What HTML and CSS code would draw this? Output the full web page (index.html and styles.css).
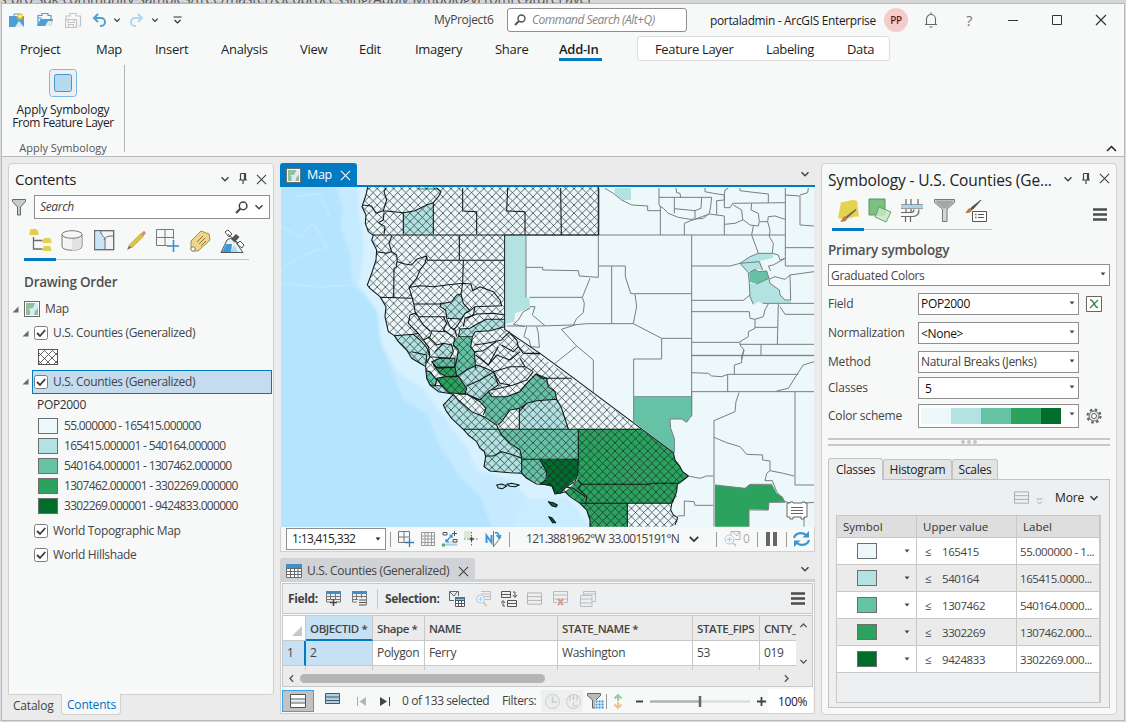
FILE: index.html
```html
<!DOCTYPE html>
<html lang="en">
<head>
<meta charset="utf-8">
<title>MyProject6</title>
<link rel="stylesheet" href="styles.css">
</head>
<body>
<svg class="defs" width="0" height="0" aria-hidden="true">
  <defs>
    <symbol id="chev" viewBox="0 0 10 10"><path d="M1.500 3.200l3.500 3.500 3.500-3.500" fill="none" stroke="currentColor" stroke-width="1.500"/></symbol>
    <symbol id="close" viewBox="0 0 12 12"><path d="M1 1l10 10M11 1L1 11" fill="none" stroke="currentColor" stroke-width="1.200"/></symbol>
    <symbol id="pin" viewBox="0 0 10 12"><path d="M2.500 .5h5v6M2.500 .5v6M6.500 .5v6M1 7h8M5 7v4" fill="none" stroke="currentColor" stroke-width="1.200"/></symbol>
    <symbol id="caret" viewBox="0 0 6 4"><path d="M.6.500h4.800L3 3.400z" fill="currentColor"/></symbol>
    <symbol id="lens" viewBox="0 0 12 12"><circle cx="7.500" cy="4.500" r="3.500" fill="none" stroke="currentColor" stroke-width="1.400"/><path d="M5 7L1 11" stroke="currentColor" stroke-width="1.900"/></symbol>
    <symbol id="check" viewBox="0 0 14 14"><rect x=".5" y=".5" width="13" height="13" rx="2" fill="#fff" stroke="#7c7c7c"/><path d="M3 7l3 3 5.200-6" fill="none" stroke="#3c3c3c" stroke-width="1.800"/></symbol>
    <symbol id="tri" viewBox="0 0 7 7"><path d="M6.500.5v6h-6z" fill="#6a6a6a"/></symbol>
    <symbol id="mapico" viewBox="0 0 16 16"><rect x=".5" y=".5" width="15" height="15" fill="#fff" stroke="#6a6a6a"/><path d="M2 2h12v12H2z" fill="#93bf95"/><path d="M14 2v5l-3 3-1 4H6V9L4 8l5-1 2-5z" fill="#d6ecfa"/></symbol>
    <symbol id="hamb" viewBox="0 0 14 13"><path d="M0 1.500h14M0 6.500h14M0 11.500h14" stroke="#4c4c4c" stroke-width="2.600"/></symbol>
    <symbol id="rows" viewBox="0 0 16 14"><path d="M.5.500h15v12H.5zM.5 4.500h15M.5 8.500h15" fill="none" stroke="currentColor"/></symbol>
    <symbol id="grid" viewBox="0 0 16 14"><path d="M.5.500h15v13H.5z" fill="#fff" stroke="#6a6a6a"/><path d="M0 0h16v4H0z" fill="#3f8fc8"/><path d="M.5 4.500h15M.5 7.500h15M.5 10.500h15M4.500 4v10M8.500 4v10M12 4v10" stroke="#6a6a6a" fill="none"/></symbol>
    <pattern id="hatch" width="8.200" height="8.200" patternUnits="userSpaceOnUse"><path d="M0 0l8.200 8.200M8.200 0L0 8.200" stroke="#16201f" stroke-opacity=".74" stroke-width=".9"/></pattern>
    <filter id="soft" x="-20%" y="-20%" width="140%" height="140%"><feGaussianBlur stdDeviation="5"/></filter>
  </defs>
</svg>

<div class="backdrop"><span>s-pro-sdk-community-samples/tree/master/Geoprocessing/ApplySymbologyFromFeatureLayer</span></div>
<div class="window">
  <header class="ribbon">
    <div class="titlebar">
      <div class="quick">
        <svg width="16" height="16" viewBox="0 0 16 16"><path d="M5 5V2h5v3" fill="none" stroke="#4f9fd6"/><path d="M0 4h15v11H0z" fill="#4f9fd6"/><path d="M6 15l4-6 5 6z" fill="#d8eef8"/><path d="M11 1v7M7.500 4.500h7M8.500 2l5 5M13.500 2l-5 5" stroke="#e0b92d" stroke-width="1.200"/><circle cx="11" cy="4.500" r="1.800" fill="#fdeb8b"/></svg>
        <svg width="17" height="16" viewBox="0 0 17 16"><path d="M1 14V3.500h4V1.500h6v2h3V7M1 6h4" fill="none" stroke="#4f9fd6" stroke-width="1.200"/><path d="M0 14l3.500-7H16l-2 7z" fill="#4f9fd6"/><path d="M8 14l3-5 4 0-1 5z" fill="#d9efe0"/></svg>
        <svg width="17" height="16" viewBox="0 0 17 16"><path d="M1 8V4h4V1.500h6V4h4.500v10H13M0.500 7.500h11v8H.5zM3 7.500v3h6v-3M3.500 15.500v-3h5v3" fill="none" stroke="#c4c4c4" stroke-width="1.200"/></svg>
        <svg width="15" height="14" viewBox="0 0 15 14"><path d="M6 1L2 5l4 4M2 5h7a4 4 0 0 1 0 8H8" fill="none" stroke="#4f9fd6" stroke-width="2"/></svg>
        <svg width="8" height="8" class="dk"><use href="#chev"/></svg>
        <svg width="15" height="14" viewBox="0 0 15 14"><path d="M9 1l4 4-4 4M13 5H6a4 4 0 0 0 0 8h1" fill="none" stroke="#b3d5ee" stroke-width="2"/></svg>
        <svg width="8" height="8" class="dk"><use href="#chev"/></svg>
        <svg width="9" height="9" viewBox="0 0 9 9"><path d="M.5 1h8M1.500 4l3 3 3-3" fill="none" stroke="#333" stroke-width="1.200"/></svg>
      </div>
      <span class="proj">MyProject6</span>
      <div class="cmd"><svg width="12" height="12" class="gy"><use href="#lens"/></svg><i>Command Search (Alt+Q)</i></div>
      <span class="user">portaladmin - ArcGIS Enterprise</span>
      <span class="avatar">PP</span>
      <svg class="bell" width="14" height="16" viewBox="0 0 14 16"><path d="M1 12.500h12M2.500 12V7a4.500 4.500 0 0 1 9 0v5M7 2.500V.5M5.500 15h3" fill="none" stroke="#666" stroke-width="1.100"/></svg>
      <span class="help">?</span>
      <svg class="min" width="10" height="10" viewBox="0 0 10 10"><path d="M0 5.500h10" stroke="#333"/></svg>
      <svg class="max" width="10" height="10" viewBox="0 0 10 10"><path d="M.5.500h9v9h-9z" stroke="#333" fill="none"/></svg>
      <svg class="cls dk" width="12" height="12"><use href="#close"/></svg>
    </div>
    <nav class="tabs">
      <span>Project</span><span>Map</span><span>Insert</span><span>Analysis</span><span>View</span><span>Edit</span><span>Imagery</span><span>Share</span><b>Add-In</b>
      <div class="ctx"><span>Feature Layer</span><span>Labeling</span><span>Data</span></div>
    </nav>
    <div class="tools">
      <div class="group">
        <svg width="28" height="28" viewBox="0 0 28 28"><rect x=".5" y=".5" width="27" height="27" rx="3" fill="#efefef" stroke="#79b9e6"/><rect x="5.500" y="5.500" width="17" height="17" rx="2" fill="#b9d9ef" stroke="#3f97d3"/></svg>
        <p>Apply Symbology</p>
        <p>From Feature Layer</p>
        <small>Apply Symbology</small>
      </div>
      <svg class="collapse" width="11" height="7" viewBox="0 0 11 7"><path d="M1 6l4.500-4.500L10 6" fill="none" stroke="#222" stroke-width="1.500"/></svg>
    </div>
  </header>

  <main class="docks">
    <aside class="left">
      <section class="pane contents">
        <div class="phead"><h2>Contents</h2><svg width="10" height="10"><use href="#chev"/></svg><svg width="10" height="12"><use href="#pin"/></svg><svg width="11" height="11"><use href="#close"/></svg></div>
        <div class="searchrow">
          <svg width="14" height="17" viewBox="0 0 14 17"><path d="M.5.500h13v2L8.500 8v8h-3V8L.5 2.500z" fill="#c9cbcd" stroke="#666"/></svg>
          <div class="search"><i>Search</i><svg width="13" height="13"><use href="#lens"/></svg><svg width="10" height="10"><use href="#chev"/></svg></div>
        </div>
        <div class="icons">
          <svg width="23" height="23" viewBox="0 0 23 23"><path d="M4.500 8v12h9M4.500 11.500h9" fill="none" stroke="#6a6a6a" stroke-width="1.300"/><path d="M1.500 0h6l2 3v3H.5V3zM15 9h6l1.500 3v2h-9v-2zM15 17h6l1.500 3v2h-9v-2z" fill="#e3ce4d"/></svg>
          <svg width="22" height="22" viewBox="0 0 22 22"><path d="M1 4.500v12c0 5 20 5 20 0v-12" fill="#f4f4f4" stroke="#777"/><path d="M11 8h9.500v9c-1 2.500-6 3.500-9.500 3.500z" fill="#e1e1e1"/><ellipse cx="11" cy="4.500" rx="10" ry="3.800" fill="#f7f7f7" stroke="#777"/></svg>
          <svg width="21" height="21" viewBox="0 0 21 21"><rect x=".7" y=".7" width="19" height="19" fill="#f3f3f3" stroke="#666" stroke-width="1.300"/><path d="M1.500 1.500h5c1 5 5 5 4 9v8.500h-9z" fill="#c9e6f8"/><path d="M6.500 1c1 6 5 5 4.500 10v8M10 10c2-4 5-4 9-4" fill="none" stroke="#666"/></svg>
          <svg width="21" height="21" viewBox="0 0 21 21"><path d="M1 20l2-4.500 2.500 2z" fill="#6a6a6a"/><path d="M3 15.500L15 3.500 17.500 6l-12 12z" fill="#e2c53b" stroke="#a98c22" stroke-width=".7"/><path d="M15 3.500L18 .8l2 2.200-2.500 3z" fill="#d98a72"/></svg>
          <svg width="24" height="23" viewBox="0 0 24 23"><path d="M.5.500h17V10M.5.500v16H11M9 .5v16M.5 8.500h17" fill="none" stroke="#777"/><path d="M17.500 11v12M11 17h12" stroke="#2f8fce" stroke-width="1.500"/></svg>
          <svg width="22" height="22" viewBox="0 0 22 22"><path d="M2 11L12 1l8 3 1 6-12 11H4l-2-2z" fill="#ecd68c" stroke="#b08a3a"/><path d="M8 12l6-6M10 14l6-6M12 16l5-5" stroke="#8d7440"/><circle cx="4" cy="19" r="2.200" fill="#fff" stroke="#777"/></svg>
          <svg width="25" height="24" viewBox="0 0 25 24"><path d="M1 23.500L7 11l4-2 4 3 8 11.500z" fill="#e7f2e9" stroke="#555"/><path d="M2 23l4-8h6l-1 8z" fill="#3c9ad8"/><path d="M14 16l4 7h-7z" fill="#a8d9f5"/><path d="M5 3l3-2 4 4-3 3zM17 15l3-3 4 4-2 3z" fill="#fff" stroke="#555"/><path d="M8 5l10 9" stroke="#555"/><path d="M11 10l5-5 3.500 3-5 5.500z" fill="#555"/></svg>
        </div>
        <div class="tabline"><span></span></div>
        <h3>Drawing Order</h3>
        <ul class="toc">
          <li class="t-map"><svg width="7" height="7"><use href="#tri"/></svg><svg width="16" height="16"><use href="#mapico"/></svg>Map</li>
          <li class="t-layer"><svg width="7" height="7"><use href="#tri"/></svg><svg width="14" height="14"><use href="#check"/></svg>U.S. Counties (Generalized)</li>
          <li class="t-sym"><svg width="20" height="16" viewBox="0 0 20 16"><rect x=".5" y=".5" width="19" height="15" fill="#fff" stroke="#555"/><path d="M1 7l6-6M1 15L15 1M8 15L19 4M16 15l3-3M1 4l11 11M1 12l3 3M6 1l13 13M14 1l5 5" stroke="#444" stroke-width=".8"/></svg></li>
          <li class="t-layer sel"><svg width="7" height="7"><use href="#tri"/></svg><div><svg width="14" height="14"><use href="#check"/></svg>U.S. Counties (Generalized)</div></li>
          <li class="t-pop">POP2000</li>
          <li class="t-class"><span class="sw c1"></span>55.000000 - 165415.000000</li>
          <li class="t-class"><span class="sw c2"></span>165415.000001 - 540164.000000</li>
          <li class="t-class"><span class="sw c3"></span>540164.000001 - 1307462.000000</li>
          <li class="t-class"><span class="sw c4"></span>1307462.000001 - 3302269.000000</li>
          <li class="t-class"><span class="sw c5"></span>3302269.000001 - 9424833.000000</li>
          <li class="t-base"><svg width="14" height="14"><use href="#check"/></svg>World Topographic Map</li>
          <li class="t-base"><svg width="14" height="14"><use href="#check"/></svg>World Hillshade</li>
        </ul>
      </section>
      <div class="ptabs"><span>Catalog</span><span class="on">Contents</span></div>
    </aside>

    <section class="center">
      <div class="mtabs"><div class="mtab"><svg width="15" height="15"><use href="#mapico"/></svg><span>Map</span><svg width="11" height="11"><use href="#close"/></svg></div><svg width="10" height="10"><use href="#chev"/></svg></div>
      <svg class="map" width="533" height="340" viewBox="281 187 533 340">
        <rect x="281" y="187" width="534" height="340" fill="#b5e4fe"/>
        <g transform="translate(280 160) scale(.33333)">
          <path d="M160 60L190 150 180 200 210 280 215 370 290 440 300 540 330 620 370 720 440 760 480 860 540 950 600 1010 640 1110H1000L700 600 400 60z" fill="#c6eaff" filter="url(#soft)"/>
          <path d="M235 60L235 160 250 230 250 300 235 370 295 460 305 550 355 640 425 680 485 760 560 860 590 930 690 960 770 1040 840 1110H1000L700 600 400 60z" fill="#d8f1ff" filter="url(#soft)"/>
          <path d="M0 200L60 230 100 190 140 260 60 290 0 330M0 370L120 380 230 375M40 110L120 100 150 170" fill="none" stroke="#bfe8ff" stroke-width="6"/>
          <path d="M700 1100L730 1020 860 1010 930 1100z" fill="#c9ecff" filter="url(#soft)"/>
        </g>
        <g transform="translate(280 160) scale(.33333)">
          <path class="f1" d="M265 70L258 105 246 140 258 165 256 190 265 215 280 226 275 240 290 270 288 300 275 340 262 375 270 385 300 410 318 440 315 470 325 515 343 527 355 545 380 570 395 595 420 610 437 620 440 655 450 675 475 695 505 700 520 703 500 725 490 735 500 755 515 775 550 808 565 825 590 845 600 865 613 875 617 890 612 920 630 933 655 935 690 938 725 940 740 955 770 972 815 975 825 1002 840 1000 855 995 870 1010 900 1030 920 1050 930 1080 930 1110H1620V70z"/>
          <path class="f2" d="M370 158L405 152 460 130 460 223 370 223zM677 228H738V412L748 415 750 445 705 460 703 485 677 492zM481 428L515 425 530 405 543 402 550 430 570 452 555 460 545 477 500 475 497 450 481 440zM674 478L620 478 595 490 570 505 540 507 535 530 572 532 585 515 630 512 674 500zM343 527L400 523 420 540 440 562 450 590 440 610 437 618 420 610 395 598 385 575zM465 575L490 550 515 555 520 575 510 595 470 592z"/>
          <path class="f3" d="M415 84H475V89H415zM525 533L577 532 572 560 583 575 587 625 560 630 530 650 525 620 530 600 535 570 520 555z"/>
          <g transform="translate(780 0)">
            <path class="f2" d="M225 84H273V120H248L222 98zM600 310L630 290 655 280 697 280 700 293 660 303 668 330 650 328 625 338zM628 370L650 372 687 358 690 370 718 390 720 405 735 420 753 422V430H668L655 425 640 433 630 410z"/>
            <path class="f3" d="M628 338L645 328 655 335 680 333 687 355 650 372 628 365z"/>
            <path class="gl" d="M177 84V225M-106 225H735M195 85L220 100 245 120 275 135 323 138V152H361M357 84V135L361 140V225M357 112H515L512 140 508 160 490 175 450 178 415 172 385 160 370 145 360 138M403 113V160M403 146L465 152V175M485 113L483 145 465 152M433 225V190L450 183 508 162 530 165 553 168V225M553 105V120L530 122V165M408 84L410 98 420 100 422 112M495 84V95L520 100 553 105 555 90 565 84M553 105V143H570L578 130 735 128M600 84V92L640 97 685 102V128M736 84V318H822M736 263H822M735 105L780 108V195L822 198M780 105L803 98 805 84M553 193L585 190 608 180 605 150 580 135M608 178L630 195 655 198 658 185H683L685 170 705 168 735 178M635 130L633 150 655 160 658 185M640 198L635 225 648 260 655 280M683 185L690 210 688 230 700 250 697 280"/>
            <path class="gl" d="M455 318H570L600 310 630 290 655 280H697L715 285 720 300 735 295 700 315 685 318 692 333M600 310L658 305 668 330M455 421H610L630 405M687 358L705 350 735 358 750 345 822 335M750 345L752 420M753 430H822M668 430H753M455 455H628L630 475 645 478 670 470 675 450 685 432M645 478V505L625 515V530L600 545V555L612 570 605 600M645 502H712M715 432L712 552M720 440L735 463H822M455 547H598M600 553H822M663 553V587M455 587H822"/>
            <path class="gl" d="M-42 228V412M-42 322H8V330L115 332 118 348 175 352V225M-32 412H127L150 355M127 412L133 430 130 458 110 475 100 495 0 498H-100M100 495L140 491H280L285 465 290 440 285 402 272 400 256 350V318H177M215 318V491M285 401H455M280 491L365 535H455M365 535V597M281 597V710M281 597H365M455 225V770M281 710H455M64 508L105 495M64 508L110 558 160 600V697M110 558L45 610"/>
            <path class="gl" d="M-30 445L-50 455 -65 480 -80 493 -45 500M-30 440H-15L-23 465 15 497M-40 500L-48 530 -32 540 -28 560 -2 562 -5 520 -10 500M600 310L625 338 628 370 630 410 640 433M628 338L645 328 655 335 680 333 687 355 650 372M687 358L690 370 718 390 720 405 735 420H753"/>
          </g>
          <g transform="translate(0 570)">
            <path class="f3" d="M455 35L480 25H525V50L470 52zM437 62L450 65 470 90 465 110 450 105 440 85z"/>
            <path class="f4" d="M460 45L475 55 525 52 530 78 500 80 480 70zM470 85L495 80H535L560 115 555 132 505 128 485 108z"/>
            <path class="f2" d="M450 105L485 108 505 128 475 125zM530 80L560 60 590 45 610 52 640 65 655 105 625 125 600 150 560 132 560 115zM520 133L535 150 575 185 612 200 650 225 655 238 665 255 690 280 720 300 725 325V370L655 365 630 363 612 350 617 320 613 305 600 295 590 275 565 255 550 238 515 205 500 185 490 165zM718 185L740 160 770 152 830 148 845 175 865 237H718z"/>
            <path class="f3" d="M600 150L625 125 635 140 680 140 720 125 745 95 768 72 800 85 805 110 825 125 830 148 770 152 740 160 720 175 690 180 665 215 655 225 615 200 615 175zM655 238H895V328H780L800 365 798 390 780 402 740 385 725 370V328L720 300 690 280 665 255z"/>
            <path class="f5" d="M780 330L895 328 893 375 885 390 860 410 840 430 825 432 815 410 780 402 800 390 802 370z"/>
          </g>
          <g transform="translate(780 570)">
            <path class="f3" d="M282 140H453V195L440 217 425 207H390L392 235 403 265V308L281 215z"/>
            <path class="f4" d="M115 237H303L400 308 405 330 420 350 428 365 445 378 430 390 412 405 410 425 405 445 395 460H262V530H150V510L140 480 120 460 75 425 95 410 113 390zM525 405L615 415 630 403 697 405 710 430 728 440 735 455 687 457 685 480 627 478V530H525z"/>
            <path class="gl" d="M455 16H822M612 0L605 20V38L583 45V73M455 68L505 70 515 78 545 80 563 73H775M455 125H822M563 73V125M822 35L790 45 770 75 745 115 710 123M455 125V195L440 217 425 207H390L392 235 403 265V308M597 128L588 155 585 185 522 212V530M765 125V405H822M522 262L560 278 600 290 620 313 668 315V330L690 333V362L680 370 675 392H697L710 425 735 455M690 362L730 370 762 378M735 455L760 462 822 457M792 490V530M445 378L480 385 500 378H520M413 498L433 497V453L462 455 465 466H520M281 140V215M525 405L615 415 630 403H697M687 457H735M687 457L685 480H627V530"/>
          </g>
        </g>
        <path fill="url(#hatch)" d="M368 187L366 195 362 206.700 366 215 365.300 223.300 368.300 231.700 373.300 235.300 371.700 240 376.700 250 376 260 371.700 273.300 367.300 285 370 288.300 380 296.700 386 306.700 385 316.700 388.300 331.700 394.300 335.700 398.300 341.700 406.700 350 411.700 358.300 420 363.300 425.700 366.700 426.700 378.300 430 385 438.300 391.700 448.300 393.300 453.300 394.300 446.700 401.700 443.300 405 446.700 411.700 451.700 418.300 463.300 429.300 468.300 435 476.700 441.700 480 448.300 484.300 451.700 485.700 456.700 484 466.700 490 471 510 472.700 521.700 473.300 526.700 478.300 536.700 484 551.700 485 555 494 560 493.300 565 491.700 570 496.700 580 503.300 586.700 510 590 520V527H672L677.500 522 678 517 673 515 670.500 508 676.700 498 677.500 486 688.300 476 682 470 675 460 673.300 452.700 504.700 330V235.300H598.300V187z"/>
        <g transform="translate(280 160) scale(.33333)">
          <path class="bl" d="M265 70L258 105 246 140 258 165 256 190 265 215 280 226 275 240 290 270 288 300 275 340 262 375 270 385 300 410 318 440 315 470 325 515 343 527 355 545 380 570 395 595 420 610 437 620 440 655 450 675 475 695 505 700 520 703 500 725 490 735 500 755 515 775 550 808 565 825 590 845 600 865 613 875 617 890 612 920 630 933 655 935 690 938 725 940 740 955 770 972 815 975 825 1002 840 1000 855 995 870 1010 900 1030 920 1050 930 1080 930 1110M955 70V225H280M674 226V508L780 580 875 650 1180 878 1185 900 1200 920 1208 935 1225 948 1210 960 1192 972 1190 995 1175 1032 1172 1050 1180 1065 1193 1073 1185 1095"/>
          <path class="bl" d="M246 135L275 138 288 160 310 152 320 120 312 95 318 84M312 158L310 180 295 188 315 200 312 223M310 152L370 158 405 152 440 135 460 128 475 110 483 95 470 84M370 158V223M460 130V223M548 84V153L590 155V223M683 84L680 153 735 155V225M842 84L844 225"/>
          <path class="bl" d="M335 228L327 250 335 275 350 285 352 305M290 275L320 280 335 275M538 226V301M352 305L375 312 395 315 410 298 440 288 442 301H674M350 305V320L342 325 341 412M300 412L395 415M440 288L435 310 420 330 410 355 387 382 397 415 402 435 405 455 415 470M550 301L548 370M390 382L420 377 460 380 500 375 548 370 573 372 578 392 600 380 640 395 660 420 665 437 585 440 570 452M400 432H481L515 425 530 405 543 402 548 370M543 402L550 430 570 452 555 460 545 477 500 475 497 450 481 440V428M343 527L400 523 415 520M415 470H495M415 470L405 460 390 465 385 490 405 510 415 520 430 540 445 560 450 585M415 472L430 495 450 512 495 515M490 470L500 490 490 510 525 533M500 478L510 500 525 510 530 530M545 477L530 500 520 510M560 475L590 462 640 460 674 465M585 440L580 465 555 475 550 500M674 478H620L595 490 570 505 540 507 535 530H577L585 515 630 512 674 500M400 523L420 540 440 562 450 590 440 610M465 575L490 550 515 555 520 575 510 595 470 592 450 590M445 530L470 555 490 550M455 515L450 530 430 540"/>
          <path class="bl" d="M577 532L572 560 583 575 587 625M525 533L520 555 535 570 530 600 525 620M583 555L620 550 665 540 668 535 690 515M583 575L610 572 650 545M665 555L700 575 715 560 710 540 690 520M715 560L730 580 780 582M587 585L625 615 655 560M625 615L650 585 690 600M640 635L690 620 735 620 760 635M690 600L720 575M735 620L720 595M760 635L740 660 700 675 635 690M640 635L660 670 690 675M780 580H740M768 642L785 655H875"/>
          <g transform="translate(0 570)"><path class="bl" d="M395 5L440 15 437 48M455 35L480 25H525V50L470 52zM460 45L475 55 525 52 530 78 500 80 480 70zM470 85L495 80H535L560 115 555 132 505 128 485 108zM437 62L450 65 470 90 465 110M450 105L485 108M530 80L560 60 590 45 610 52 640 65 655 105 625 125 600 150 560 132M560 108L600 90 640 67M520 133L535 150 575 185 612 200 650 225 655 238 665 255 690 280 720 300 725 325V370M535 133L560 132 600 155 618 175 610 195M718 185L740 160 770 152 830 148 845 175 865 237M718 177V237M625 125L635 140 680 140 720 125 745 95 768 72 800 85 805 110 825 125 830 148M740 160L720 175 690 180 665 215 655 225M550 238H1083M895 238V328H725M615 318L640 318 665 305 700 315 725 325M780 330L800 365 798 390 780 402M895 328L893 375 885 395 860 410 840 430"/>
          <path class="bl" d="M893 390L905 403H1110L1115 400H1192M905 403L895 415 920 440 918 458M860 412L880 415 915 440M900 460H1175M1042 460V530"/>
          <path class="f2 bl" d="M650 405L665 402 680 408 668 416 655 414zM680 403L695 400 718 405 705 410 690 409z"/><path class="f5 bl" d="M805 455L820 458 832 465 828 471 815 467zM806 500L815 503 827 518 818 518z"/></g>
        </g>
        <path d="M787 503h3v-1h3v1h9v-1h3v1h2v14h-3v2h-3v-2h-8v2h-3v-2h-3z" fill="#fff" stroke="#666"/><path d="M791 507.500h12M791 510.500h12M791 513.500h12" stroke="#666"/>
      </svg>
      <div class="mstatus">
        <div class="scale"><span>1:13,415,332</span><svg width="6" height="4"><use href="#caret"/></svg></div>
        <i class="vs"></i>
        <svg width="17" height="16" viewBox="0 0 17 16"><path d="M.5.500h11v6M.5.500v11H7M6 .5v11M.5 6h11" fill="none" stroke="#777"/><path d="M11.500 7v9M7 11.500h9" stroke="#2f7fb8" stroke-width="1.300"/></svg>
        <svg width="14" height="14" viewBox="0 0 14 14"><path d="M.5.500h13v13H.5zM.5 4h13M.5 7h13M.5 10.500h13M4 .5v13M7 .5v13M10.500.5v13" fill="none" stroke="#999"/></svg>
        <svg width="17" height="16" viewBox="0 0 17 16"><path d="M3 14l4-4h8l1 4z" fill="#cfe8f8"/><path d="M1 1.500h4v2.500H1zM11 8.500h4v2.500h-4zM12.500 0v5M10 2.500h5" fill="none" stroke="#555"/><path d="M2 14h13" stroke="#8bbfdf"/><path d="M4 11l6-7M4 8v3h3M7.500 4H10v3" fill="none" stroke="#2f8fce" stroke-width="1.200"/><path d="M0 12.500h3v3H0z" fill="#58a55c"/></svg>
        <svg width="15" height="16" viewBox="0 0 15 16"><path d="M0 0h7v7H0z" fill="#d8ead7"/><path d="M7.500 1v14M0 8h15" stroke="#666" stroke-dasharray="1.500 1.500"/><path d="M5.500 8h4M7.500 6v4" stroke="#444" stroke-width="1.500"/></svg>
        <svg width="17" height="16" viewBox="0 0 17 16"><path d="M1.500 12V4.500l5 7V4" fill="none" stroke="#3d96d1" stroke-width="2"/><path d="M8.500 0v16M9 15l7-9" stroke="#777"/><path d="M10 2c2-1 4 0 4 4M11.500 4l2.500 3 2-3" fill="none" stroke="#3d96d1" stroke-width="1.500"/></svg>
        <i class="vs"></i>
        <span class="coord">121.3881962°W 33.0015191°N</span>
        <svg class="dk" width="12" height="12"><use href="#chev"/></svg>
        <i class="vs"></i>
        <svg width="17" height="16" viewBox="0 0 17 16"><circle cx="5.500" cy="8.500" r="4.500" fill="none" stroke="#a9cce2"/><path d="M5.500 6v5M3 8.500h5" stroke="#a9cce2"/><path d="M9 12l3 3" stroke="#e2bf94" stroke-width="1.700"/><path d="M7 .5h9v8h-5M7 .5v3M9 1l4 4 2-4" fill="none" stroke="#b5b5b5"/></svg>
        <span class="zero">0</span>
        <i class="vs"></i>
        <svg width="11" height="14" viewBox="0 0 11 14"><path d="M0 0h4v14H0zM7 0h4v14H7z" fill="#666"/></svg>
        <i class="vs"></i>
        <svg width="17" height="16" viewBox="0 0 17 16"><path d="M1 7a7 6 0 0 1 12-3M16 9a7 6 0 0 1-12 3" fill="none" stroke="#3d96d1" stroke-width="2.200"/><path d="M16 0v6.500H9.500zM1 16V9.500h6.500z" fill="#3d96d1"/></svg>
      </div>

      <div class="ttabs"><div class="ttab"><svg width="16" height="14"><use href="#grid"/></svg><span>U.S. Counties (Generalized)</span><svg width="11" height="11"><use href="#close"/></svg></div><svg width="10" height="10"><use href="#chev"/></svg></div>
      <div class="tbox">
        <div class="ttools">
          <b>Field:</b>
          <svg width="15" height="15" viewBox="0 0 15 15"><path d="M.5 1v10H5M14.500 1v10H10M0 5.500h15M0 8.500h15M4.500 1v8M9.500 1v8" fill="none" stroke="#777"/><path d="M0 0h15v3H0z" fill="#3f8fc8"/><path d="M7.500 8v7M4 11.500h7" stroke="#444" stroke-width="1.500"/></svg>
          <svg width="15" height="15" viewBox="0 0 15 15"><path d="M.5 1v10H5M14.500 1v13M0 5.500h15M0 8.500h6M4.500 1v8M9.500 1v6" fill="none" stroke="#777"/><path d="M0 0h15v3H0z" fill="#3f8fc8"/><path d="M7 9h7M7 11.500h7M7 14h7" stroke="#555" stroke-width="1.200"/></svg>
          <i class="vs"></i>
          <b>Selection:</b>
          <svg width="16" height="16" viewBox="0 0 16 16"><path d="M5 9.500H.5v-9h9V5M1 1l4 4 3-4" fill="none" stroke="#666"/><path d="M6.500 6.500h9v9h-9zM6.500 9.500h9M6.500 12.500h9M9.500 9v7M12.500 9v7" fill="#fff" stroke="#555"/><path d="M6 6h10v2.500H6z" fill="#2f7fb8"/></svg>
          <svg width="16" height="16" viewBox="0 0 16 16"><path d="M6 .5h9.500v8H10M6 3h9M8 5.500h7" fill="none" stroke="#c0c0c0"/><circle cx="5.500" cy="8" r="4" fill="#eef5fa" stroke="#a9cce2"/><path d="M5.500 6v4M3.500 8h4" stroke="#a9cce2"/><path d="M8.500 11.500l3 3.500" stroke="#e6c79e" stroke-width="2"/></svg>
          <svg width="16" height="16" viewBox="0 0 16 16"><path d="M.5.500h9v6h-9zM.5 3.500h9M6.500 9.500h9v6h-9zM6.500 12.500h9M12 1h2v5M12 4l2 2.500L16 4M4 15H2v-4M0 12l2-2.500L4 12" fill="none" stroke="#555"/></svg>
          <svg width="15" height="14" class="lt"><use href="#rows"/></svg>
          <svg width="15" height="15" viewBox="0 0 15 15"><path d="M.5.500h14v11H10M.5.500v11H4M.5 4h14M.5 8h14" fill="none" stroke="#bbb"/><path d="M5 8l5 6M10 8l-5 6" stroke="#e0988a" stroke-width="2"/></svg>
          <svg width="16" height="16" viewBox="0 0 16 16"><path d="M3.500 4V.5h12v10H12M.5 4.500h11.500v11H.5zM.5 8h11.500M.5 12h11.500M4 3h11" fill="none" stroke="#b5bec2"/></svg>
          <svg class="menu" width="14" height="13"><use href="#hamb"/></svg>
        </div>
        <div class="gridbox">
          <div class="cells">
            <div class="h corner"><svg width="10" height="10"><path d="M10 0v10H0z" fill="#c8c8c8"/></svg></div><div class="h hl">OBJECTID *</div><div class="h">Shape *</div><div class="h">NAME</div><div class="h">STATE_NAME *</div><div class="h">STATE_FIPS</div><div class="h last">CNTY_</div>
            <div class="rn">1</div><div class="hb">2</div><div>Polygon</div><div>Ferry</div><div>Washington</div><div>53</div><div class="last">019</div>
            <div class="e"></div><div class="e"></div><div class="e"></div><div class="e"></div><div class="e"></div><div class="e"></div><div class="e last"></div>
          </div>
          <div class="vscroll"><svg class="flip" width="9" height="9"><use href="#chev"/></svg><svg width="9" height="9"><use href="#chev"/></svg></div>
          <div class="hscroll"><svg class="rl" width="9" height="9"><use href="#chev"/></svg><span></span><svg class="rr" width="9" height="9"><use href="#chev"/></svg></div>
        </div>
        <div class="tnav">
          <div class="actbtn"><svg width="16" height="14" viewBox="0 0 16 14"><path d="M.5.500h15v13H.5z" fill="#fff" stroke="#555"/><path d="M1 5h14M1 9h14" stroke="#555"/><path d="M1 6.500h14v1.500H1z" fill="#bfe3f5"/></svg></div>
          <svg class="n1" width="15" height="12" viewBox="0 0 15 12"><path d="M.5.500h14v10H.5z" fill="#a9d0ea" stroke="#555"/><path d="M1 4h13M1 7.500h13" stroke="#555"/></svg>
          <svg class="n2" width="9" height="9" viewBox="0 0 9 9"><path d="M.5 0v9" stroke="#aaa"/><path d="M9 0v9L2.500 4.500z" fill="#b5b5b5"/></svg>
          <svg class="n3" width="10" height="9" viewBox="0 0 10 9"><path d="M9.500 0v9" stroke="#444"/><path d="M0 0v9l7-4.500z" fill="#444"/></svg>
          <span class="n4">0 of 133 selected</span><span class="n5">Filters:</span>
          <div class="dis"><svg width="15" height="15" viewBox="0 0 15 15"><circle cx="7.500" cy="7.500" r="7" fill="#ececec" stroke="#cbcbcb"/><path d="M7.500 3v5H12" fill="none" stroke="#bcd6bd" stroke-width="1.500"/></svg><svg width="15" height="15" viewBox="0 0 15 15"><circle cx="7.500" cy="7.500" r="7" fill="#ececec" stroke="#cbcbcb"/><path d="M4 1v6M7.500 0v6M11 1v6M3 3h2M6.500 4h2M10 2h2M7.500 8v4H12" fill="none" stroke="#c5c9d0"/></svg></div>
          <svg class="n6" width="18" height="16" viewBox="0 0 18 16"><path d="M.5.500h13v2L9 7v8H5.500V7L.5 2.500z" fill="#b8babc" stroke="#666"/><path d="M8 7h8v9H8z" fill="#fff"/><path d="M8.500 8.500h8M8.500 11.500h8M8.500 14.500h8" stroke="#2f8fce" stroke-width="2" stroke-dasharray="2 1"/></svg>
          <i class="vs"></i>
          <svg class="n7" width="10" height="15" viewBox="0 0 10 15"><path d="M5 7V1M1.500 4.500L5 1l3.500 3.500" fill="none" stroke="#9ccaa0" stroke-width="2"/><path d="M5 8v6M1.500 10.500L5 14l3.500-3.500" fill="none" stroke="#f0c08e" stroke-width="2"/></svg>
          <svg class="n8" width="132" height="13" viewBox="0 0 132 13"><path d="M0 6.500h7M121 6.500h9M125.500 2v9" stroke="#444" stroke-width="1.800"/><path d="M14 6.500h50" stroke="#b0b0b0" stroke-width="2.500"/><path d="M64 6.500h50" stroke="#dcdcdc" stroke-width="2.500"/><path d="M64 1v11" stroke="#666" stroke-width="2.500"/></svg>
          <span class="pct">100%</span>
        </div>
      </div>
    </section>

    <section class="pane sym">
      <div class="phead"><h2>Symbology - U.S. Counties (Ge...</h2><svg width="10" height="10"><use href="#chev"/></svg><svg width="10" height="12"><use href="#pin"/></svg><svg width="11" height="11"><use href="#close"/></svg></div>
      <div class="sicons">
        <svg width="23" height="24" viewBox="0 0 23 24"><path d="M4 3c5 1 11-4 16-1l2 16c-5-2-10 4-21 1z" fill="#e7d24f"/><path d="M18.500 10l-9 7-2 3 3-1 9-8z" fill="#666"/><path d="M8 17l2.500 2.500C9 23 6 23 3 22.500c2-1 2-4 5-5.500z" fill="#c07a3e"/></svg>
        <svg width="25" height="25" viewBox="0 0 25 25"><path d="M1 1h16v16H1z" fill="#7dbf80" stroke="#4d9b58"/><path d="M11 9l12 5-5 10-11-5z" fill="#c7e6c6" fill-opacity=".85" stroke="#5ba866"/></svg>
        <svg width="22" height="23" viewBox="0 0 22 23"><path d="M5 0v6M10 0v6M17 0v6M5 10v3M10 10v3M0 13.500h10c2 0 3-1 3-3M0 17.500h12c3 0 6-2 6-7M4.500 17v6M9.500 17v6" fill="none" stroke="#666" stroke-width="1.200"/><path d="M0 6h22v3H0z" fill="#a9d3ee"/><path d="M0 5.500h22M0 9.500h22" stroke="#777" stroke-width=".7"/></svg>
        <svg width="21" height="23" viewBox="0 0 21 23"><path d="M.5.500h20v3L13 10v12.500H8.500V10L.5 3.500z" fill="#d4d6d7" stroke="#777"/><path d="M2 1.500h17v2L12 9.500H9.500L2 3.500z" fill="#a4a6a8"/></svg>
        <svg width="24" height="24" viewBox="0 0 24 24"><path d="M17 1L8 8 6 11l3-1z" fill="#555" stroke="#555"/><path d="M6 9l2 2c-1 3-4 3-7 3 2-1 2-4 5-5z" fill="#c07a3e"/><path d="M8.500 12.500h14v10h-14z" fill="#fff" stroke="#555"/><path d="M14 15.500h6M14 18.500h6" stroke="#555"/><path d="M11 15.500h1.500M11 18.500h1.500" stroke="#7a5fb0" stroke-width="1.500"/></svg>
        <svg class="menu" width="14" height="13"><use href="#hamb"/></svg>
      </div>
      <div class="tabline"><span></span></div>
      <h3>Primary symbology</h3>
      <div class="combo wide"><span>Graduated Colors</span><svg width="6" height="4"><use href="#caret"/></svg></div>
      <div class="form">
        <label>Field</label><div class="combo bk"><span>POP2000</span><svg width="6" height="4"><use href="#caret"/></svg></div><svg width="16" height="16" viewBox="0 0 16 16"><path d="M.5.500h15v15H.5z" fill="#fff" stroke="#666"/><path d="M4 4c4-1 4 8 8 7.500M12 4L4 12" fill="none" stroke="#3c8a48" stroke-width="1.400"/></svg>
        <label>Normalization</label><div class="combo bk"><span>&lt;None&gt;</span><svg width="6" height="4"><use href="#caret"/></svg></div><span></span>
        <label>Method</label><div class="combo"><span>Natural Breaks (Jenks)</span><svg width="6" height="4"><use href="#caret"/></svg></div><span></span>
        <label>Classes</label><div class="combo bk"><span class="five">5</span><svg width="6" height="4"><use href="#caret"/></svg></div><span></span>
        <label>Color scheme</label><div class="combo ramp"><div><span class="c1"></span><span class="c2"></span><span class="c3"></span><span class="c4"></span><span class="c5"></span></div><svg width="6" height="4"><use href="#caret"/></svg></div><svg width="16" height="16" viewBox="0 0 16 16"><circle cx="8" cy="8" r="6.500" fill="none" stroke="#666" stroke-width="2.200" stroke-dasharray="2.600 2.500"/><circle cx="8" cy="8" r="5" fill="#e9eaea" stroke="#666"/><circle cx="8" cy="8" r="2.500" fill="#fff" stroke="#666"/></svg>
      </div>
      <div class="splitter"><svg width="18" height="4" viewBox="0 0 18 4"><circle cx="3" cy="2" r="2" fill="#c6c6c6"/><circle cx="9" cy="2" r="2" fill="#c6c6c6"/><circle cx="15" cy="2" r="2" fill="#c6c6c6"/></svg></div>
      <div class="ctabs"><span class="on">Classes</span><span>Histogram</span><span>Scales</span></div>
      <div class="cpanel">
        <div class="more"><svg width="15" height="14" class="lt2"><use href="#rows"/></svg><svg width="7" height="7" viewBox="0 0 7 7"><path d="M.5 1h6M1 3.500l2.500 2.500L6 3.500" fill="none" stroke="#aaa"/></svg><span>More</span><svg width="10" height="10" class="dk"><use href="#chev"/></svg></div>
        <div class="ctable">
          <div class="crow ch"><span>Symbol</span><span>Upper value</span><span>Label</span></div>
          <div class="crow"><span><i class="sw c1"></i><svg width="6" height="4"><use href="#caret"/></svg></span><span><em>≤</em>165415</span><span>55.000000 - 1...</span></div>
          <div class="crow alt"><span><i class="sw c2"></i><svg width="6" height="4"><use href="#caret"/></svg></span><span><em>≤</em>540164</span><span>165415.0000...</span></div>
          <div class="crow"><span><i class="sw c3"></i><svg width="6" height="4"><use href="#caret"/></svg></span><span><em>≤</em>1307462</span><span>540164.0000...</span></div>
          <div class="crow alt"><span><i class="sw c4"></i><svg width="6" height="4"><use href="#caret"/></svg></span><span><em>≤</em>3302269</span><span>1307462.000...</span></div>
          <div class="crow"><span><i class="sw c5"></i><svg width="6" height="4"><use href="#caret"/></svg></span><span><em>≤</em>9424833</span><span>3302269.000...</span></div>
        </div>
      </div>
    </section>
  </main>
</div>
</body>
</html>
```
FILE: styles.css
```css
* { box-sizing: border-box; }
body { margin: 0; width: 1126px; height: 722px; overflow: hidden; background: #d9dadb; font: 12px/16px "Open Sans", "Noto Sans", sans-serif; letter-spacing: -.33px; color: #444; }
svg { display: block; flex: none; }
.defs { position: absolute; }
h2, h3, p, ul { margin: 0; padding: 0; font-weight: 400; }
span, label, b, i, li, p, small, h2, h3 { white-space: nowrap; }
.dk { color: #333; }
.gy { color: #555; }
.vs { flex: none; width: 1px; height: 15px; background: #9a9a9a; }
.c1 { background: #edf8fb; }
.c2 { background: #b2e2e2; }
.c3 { background: #66c2a4; }
.c4 { background: #2ca25f; }
.c5 { background: #006d2c; }

.backdrop { height: 3px; overflow: hidden; background: #d5d6d8; color: #555; }
.backdrop span { display: block; margin-top: -9px; font-size: 14px; line-height: 16px; letter-spacing: -.27px; }
.window { margin-left: 1px; width: 1124px; height: 718px; border: 1px solid #b9b9bb; background: #ebebeb; }
.ribbon { height: 153px; background: #f7f9f9; border-bottom: 1px solid #b9b9bb; display: flex; flex-direction: column; }

.titlebar { height: 32px; display: flex; align-items: center; }
.quick { width: 432px; height: 32px; padding-left: 7px; display: grid; grid-template-columns: 28px 28px 27px 21px 16px 22px 22px 9px; align-items: center; }
.proj { width: 73px; }
.cmd { width: 180px; height: 24px; border: 1px solid #8f8f8f; border-radius: 3px; background: #fff; display: flex; align-items: center; gap: 6px; padding-left: 6px; color: #858585; letter-spacing: -.5px; }
.user { width: 197px; padding-left: 23px; color: #1c1c1c; letter-spacing: -.3px; font-size: 11.900px; }
.avatar { width: 24px; height: 24px; border-radius: 50%; background: #f3cccb; color: #6b1d1d; font-size: 10px; line-height: 24px; text-align: center; font-weight: 600; }
.bell { margin-left: 16px; }
.help { width: 20px; margin-left: 28px; font-size: 15px; color: #777; }
.min { margin-left: 22px; }
.max { margin-left: 34px; }
.cls { margin-left: 33px; }

.tabs { height: 25px; display: grid; grid-template-columns: 76px 59px 66px 79px 59px 56px 80px 65px 78px 253px; padding-left: 17px; font-size: 13px; line-height: 26px; letter-spacing: -.28px; color: #1d1d1d; }
.tabs > span { padding-left: 1px; }
.tabs b { width: 43px; height: 25px; border-bottom: 3px solid #007ac2; font-weight: 600; }
.ctx { height: 25px; border: 1px solid #dcdcdc; border-radius: 3px; background: #fff; display: grid; grid-template-columns: 111px 81px 40px; padding-left: 17px; line-height: 24px; letter-spacing: -.35px; }

.tools { flex: 1; display: flex; justify-content: space-between; align-items: flex-end; padding: 4px 7px 4px 0; }
.group { width: 123px; height: 87px; border-right: 1px solid #b5b5b5; display: flex; flex-direction: column; align-items: center; padding-top: 4px; color: #1d1d1d; }
.group p { line-height: 13px; letter-spacing: -.42px; }
.group svg { margin-bottom: 6px; }
.group p:nth-of-type(1) { letter-spacing: -.18px; }
.group small { font-size: 11px; line-height: 14px; margin-top: 12px; color: #555; letter-spacing: 0; }

.docks { display: flex; padding: 6px 0 0 6px; height: 563px; }
.left { width: 266px; height: 552px; margin-right: 6px; }
.pane { background: #f7f9f9; border: 1px solid #d0d0d0; border-radius: 4px; }
.contents { height: 532px; border-bottom-left-radius: 0; }
.phead { height: 30px; display: flex; align-items: center; padding: 0 6px; gap: 8px; color: #444; }
.phead h2 { flex: 1; font-size: 15px; line-height: 20px; letter-spacing: -.25px; color: #222; }
.searchrow { display: flex; align-items: center; padding: 0 3px; gap: 8px; height: 26px; }
.search { flex: 1; height: 24px; border: 1px solid #8f8f8f; background: #fff; display: flex; align-items: center; padding: 0 5px; gap: 6px; }
.search i { flex: 1; }
.icons { display: grid; grid-template-columns: repeat(7, 32px); justify-items: center; align-items: center; height: 38px; padding: 3px 0 0 15px; }
.tabline { height: 2px; margin: 0 24px 0 15px; border-bottom: 1px solid #c4c4c4; }
.tabline span { display: block; width: 32px; height: 3px; background: #007ac2; }
h3 { font-size: 13.500px; font-weight: 600; letter-spacing: -.24px; color: #505050; }
.contents h3 { margin: 13px 0 0 15px; line-height: 18px; }
.toc { list-style: none; margin-top: 6px; }
.toc li { display: flex; align-items: center; }
.t-map { height: 24px; padding-left: 3px; gap: 5px; }
.t-layer { height: 24px; padding-left: 13px; gap: 5px; }
.t-sym { height: 24px; padding-left: 29px; }
.toc .sel { height: 25px; padding-left: 13px; gap: 3px; }
.sel div { flex: 1; height: 24px; margin-right: 1px; border: 1px solid #007ac2; background: #c5dbee; display: flex; align-items: center; gap: 5px; padding-left: 1px; }
.t-pop { height: 22px; padding-left: 28px; color: #333; }
.t-class { height: 20px; padding-left: 29px; gap: 6px; letter-spacing: -.68px; }
.sw { display: block; width: 20px; height: 16px; border: 1px solid #6e6e6e; }
.t-base { height: 24px; padding: 6px 0 0 25px; gap: 5px; }
.ptabs { display: flex; height: 20px; line-height: 19px; letter-spacing: -.2px; }
.ptabs span { width: 53px; padding-left: 5px; margin-top: 1px; }
.ptabs .on { width: 60px; height: 21px; margin-top: -1px; background: #f7f9f9; border: 1px solid #d0d0d0; border-top: 0; border-radius: 0 0 4px 4px; color: #0070c5; line-height: 22px; }

.center { width: 535px; margin-right: 6px; }
.mtabs { height: 24px; border-bottom: 2px solid #007ac2; display: flex; justify-content: space-between; align-items: center; padding-right: 5px; }
.mtab { width: 77px; height: 22px; background: #007ac2; border-radius: 3px 3px 0 0; color: #fff; display: flex; align-items: center; padding: 2px 0 0 6px; font-size: 12.500px; }
.mtab span { width: 33px; padding-left: 6px; margin-right: 6px; }
.map { margin-left: 1px; }
.f1 { fill: #edf8fb; }
.f2 { fill: #b2e2e2; }
.f3 { fill: #66c2a4; }
.f4 { fill: #2ca25f; }
.f5 { fill: #006d2c; }
.gl { fill: none; stroke: #777d7f; stroke-width: 3; stroke-linejoin: round; }
.bl { stroke: #10181a; stroke-width: 3.200; stroke-linejoin: round; }
.bl:not(.f2):not(.f5) { fill: none; }

.mstatus { height: 25px; border: 1px solid #d0d0d0; border-top: 0; background: #f7f9f9; display: grid; align-items: center; grid-template-columns: 104px 8px 23px 21px 22px 21px 24px 17px 162px 28px 8px 19px 14px 9px 20px 7px 17px; padding-left: 5px; }
.scale { width: 100px; height: 22px; border: 1px solid #8f8f8f; background: #fff; display: flex; align-items: center; justify-content: space-between; padding: 0 4px 0 5px; color: #222; letter-spacing: -.65px; }
.coord { letter-spacing: -.7px; word-spacing: 1px; }
.zero { color: #aaa; }

.ttabs { margin-top: 6px; height: 24px; border-bottom: 3px solid #d1d2d6; display: flex; justify-content: space-between; align-items: center; padding-right: 5px; }
.ttab { width: 195px; height: 24px; margin-bottom: -3px; background: #d1d2d6; border-radius: 3px 3px 0 0; display: flex; align-items: center; padding: 2px 0 0 6px; }
.ttab span { width: 156px; padding-left: 5px; }
.tbox { border: 1px solid #d0d0d0; border-top: 0; height: 132px; padding: 1px 1px 0; background: #f7f9f9; }
.ttools { height: 31px; border: 1px solid #c8c8c8; background: #eeeff1; display: grid; align-items: center; grid-template-columns: 38px 26px 25px 8px 64px 26px 26px 26px 26px 27px 26px 1fr; padding: 0 7px 0 5px; }
.ttools b { font-weight: 700; letter-spacing: -.38px; }
.ttools .menu { justify-self: end; }
.ttools .vs { height: 20px; background: #c8c8c8; }
.lt { color: #b0b0b0; }
.lt2 { color: #aaa; }
.gridbox { margin-top: 1px; height: 72px; border: 1px solid #c8c8c8; display: grid; grid-template: 54px 16px / 513px 1fr; background: #ebebeb; }
.cells { display: grid; grid-template: 25px 25px 4px / 23px 67px 52px 133px 135px 67px 36px; overflow: hidden; }
.cells div { border-right: 1px solid #c8c8c8; border-bottom: 1px solid #c8c8c8; background: #fff; padding-left: 4px; line-height: 23px; white-space: nowrap; }
.cells .h { background: #ebebeb; font-weight: 600; font-size: 11.500px; line-height: 26px; letter-spacing: -.42px; }
.cells .last { border-right: 0; }
.cells .corner { background: #fff; display: flex; align-items: flex-end; justify-content: flex-end; padding: 0 3px 4px; }
.cells .hl { background: #c7e1f4; border-bottom: 2px solid #007ac2; }
.cells .rn { background: #c7e1f4; border-right: 2px solid #007ac2; }
.cells .hb { background: #c7e1f4; }
.cells .e { background: #ebebeb; border-bottom: 0; }
.vscroll { display: flex; flex-direction: column; justify-content: space-between; align-items: center; padding: 5px 2px 4px 0; color: #555; }
.flip { transform: rotate(180deg); }
.rl { transform: rotate(90deg); }
.rr { transform: rotate(-90deg); }
.hscroll { display: flex; align-items: center; padding-left: 4px; width: 513px; color: #555; }
.hscroll span { width: 245px; height: 9px; border-radius: 5px; background: #b5b5b5; margin: 0 237px 0 4px; }
.tnav { height: 26px; margin-top: 1px; display: flex; align-items: center; }
.actbtn { width: 32px; height: 22px; background: #c2c2c4; border: 1px solid #3aa3e8; display: flex; align-items: center; justify-content: center; }
.n1 { margin: -4px 0 0 11px; }
.n2 { margin-left: 17px; }
.n3 { margin-left: 14px; }
.n4 { width: 100px; margin-left: 12px; letter-spacing: -.42px; }
.n5 { width: 39px; }
.dis { width: 42px; height: 22px; background: #eeeff1; display: flex; gap: 6px; align-items: center; padding-left: 4px; }
.n6 { margin: 0 1px 0 4px; }
.n7 { margin-left: 6px; }
.n8 { margin-left: 13px; }
.pct { flex: 1; background: #fff; height: 24px; line-height: 25px; text-align: center; padding-left: 4px; color: #222; }

.sym { width: 296px; height: 552px; padding: 0 6px; }
.sym .phead { height: 31px; padding: 1px 1px 0 0; margin-right: -1px; }
.sym .phead h2 { font-size: 15.500px; letter-spacing: -.14px; }
.sym .phead svg { margin-top: -3px; }
.sicons { display: grid; grid-template-columns: repeat(5, 32px) 1fr; justify-items: center; align-items: center; height: 33px; padding: 0 3px 2px 4px; }
.sicons .menu { justify-self: end; margin-top: 7px; }
.sym .tabline { margin: 0 118px 0 4px; }
.sym h3 { margin-top: 11px; line-height: 18px; }
.combo { height: 22px; border: 1px solid #8f8f8f; background: #fff; display: flex; align-items: center; justify-content: space-between; padding: 1px 3px 0 2px; }
.combo svg { color: #444; margin-top: -3px; }
.combo.wide { margin-top: 5px; }
.bk { color: #111; }
.form { display: grid; grid-template-columns: 90px 161px 1fr; grid-template-rows: 29px 30px 27px 26px 29px; align-items: center; margin-top: 3px; }
.form label { letter-spacing: -.2px; }
.form > svg { margin-left: 7px; }
.five { padding-left: 4px; }
.form .ramp { height: 24px; padding-top: 0; }
.ramp div { display: flex; height: 16px; }
.ramp span { width: 30px; }
.ramp .c5 { width: 20px; }
.splitter { height: 8px; margin-top: 8px; border-top: 2px solid #c8c8c8; border-bottom: 2px solid #c8c8c8; display: flex; justify-content: center; align-items: center; }
.ctabs { display: flex; align-items: flex-end; margin-top: 12px; height: 21px; color: #222; }
.ctabs span { height: 20px; border: 1px solid #c0c2c4; border-bottom: 0; border-radius: 3px 3px 0 0; background: #e3e4e6; width: 69px; line-height: 19px; text-align: center; letter-spacing: -.28px; }
.ctabs .on { width: 55px; height: 22px; margin-bottom: -1px; background: #eeeff1; z-index: 1; line-height: 22px; }
.ctabs span:last-child { width: 46px; }
.cpanel { height: 229px; border: 1px solid #c0c2c4; background: #eeeff1; padding: 0 8px 0 7px; }
.more { height: 35px; display: flex; align-items: center; justify-content: flex-end; gap: 4px; color: #222; padding: 1px 2px 0 0; }
.more svg:nth-child(1) { margin-right: 3px; }
.more svg:nth-child(2) { margin: 6px 8px 0 0; }
.more span { width: 30px; letter-spacing: -.1px; }
.ctable { height: 188px; border: 1px solid #c8c8c8; border-right-width: 2px; }
.crow { height: 27px; display: grid; grid-template-columns: 80px 100px 1fr; background: #fff; border-bottom: 1px solid #c8c8c8; }
.crow.alt { background: #ebebeb; }
.crow > span { border-right: 1px solid #c8c8c8; display: flex; align-items: center; padding-left: 3px; padding-top: 1px; font-size: 11.500px; letter-spacing: -.42px; }
.crow > span:first-child { padding: 0 6px 0 20px; justify-content: space-between; }
.crow > span:last-child { border-right: 0; }
.crow > span:nth-child(2) { padding-left: 8px; }
.crow em { width: 17px; font-style: normal; }
.crow.ch { height: 22px; background: #dedede; color: #333; }
.crow.ch > span, .crow.ch > span:first-child { padding: 0 0 0 6px; justify-content: flex-start; letter-spacing: 0; }
```
